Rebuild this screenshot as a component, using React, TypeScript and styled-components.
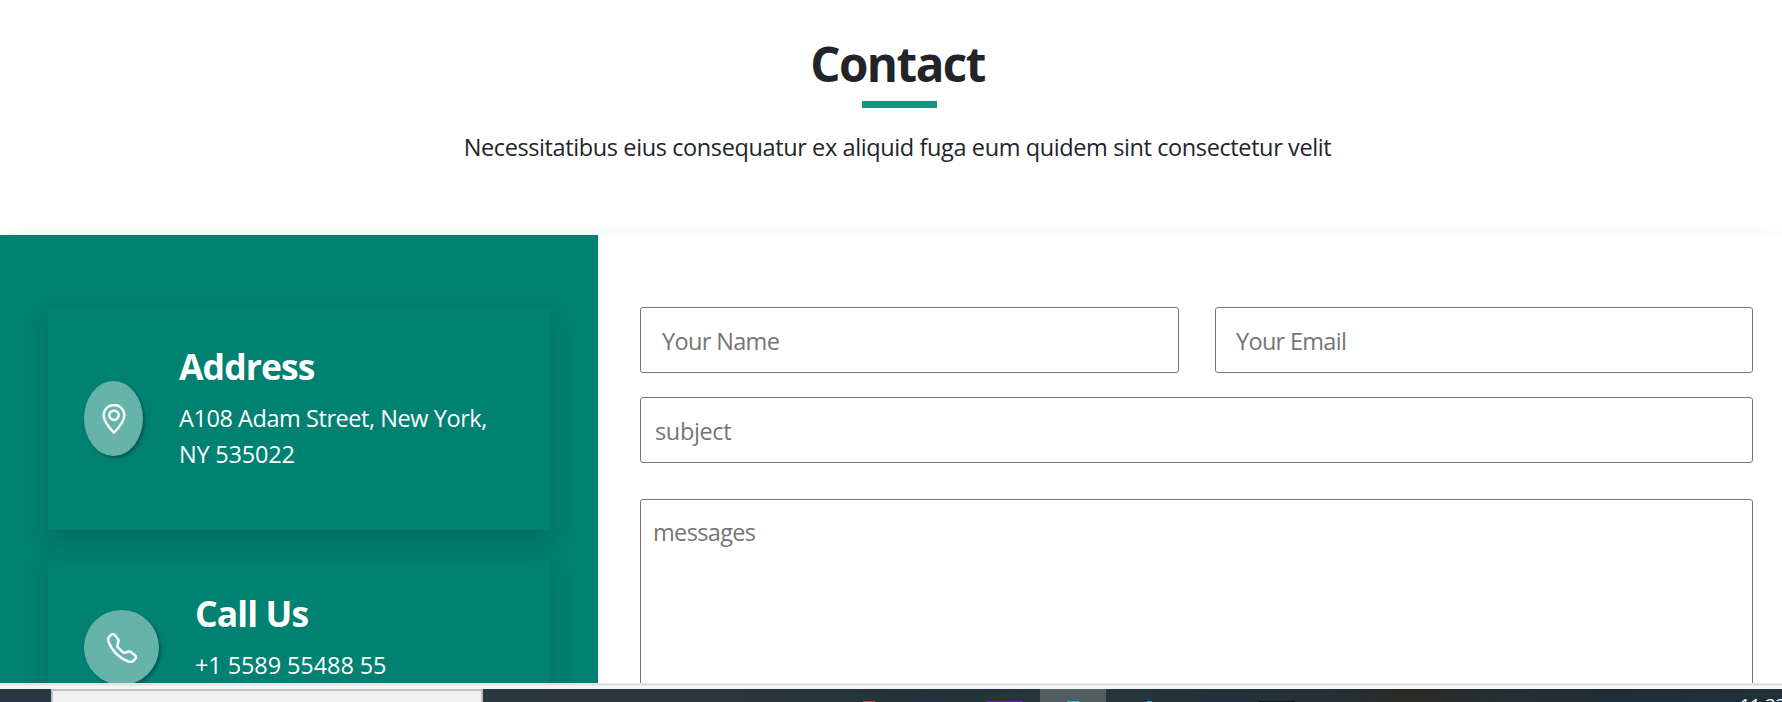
import React from "react";
import styled, { createGlobalStyle } from "styled-components";

const GlobalStyle = createGlobalStyle`
  *, *::before, *::after { box-sizing: border-box; }
  body {
    margin: 0;
    overflow: hidden;
    background: #fff;
    color: #212529;
    font-family: "Segoe UI", "Open Sans", "Noto Sans", sans-serif;
    font-size: 23.5px;
    line-height: 36px;
  }
  h2, h3, p { margin: 0; }
`;

const Screen = styled.div`
  display: flex;
  flex-direction: column;
  height: 702px;
  overflow: hidden;
`;

const Page = styled.main`
  flex: none;
  height: 683px;
  overflow: hidden;
`;

const SectionHeader = styled.header`
  display: flex;
  flex-direction: column;
  align-items: center;
  height: 235px;
  padding: 35px 0 0 13px;
`;

const Title = styled.h2`
  font-size: 47.5px;
  line-height: 58px;
  font-weight: 700;
  letter-spacing: -1.5px;
`;

const Underline = styled.div`
  width: 75px;
  height: 7px;
  margin: 8px 0 21px;
  background: #1a9282;
  transform: translateX(2px);
`;

const Intro = styled.p`
  white-space: nowrap;
  letter-spacing: -0.39px;
`;

const ContactRow = styled.section`
  display: flex;
  height: 900px;
  box-shadow: 0 12px 24px rgba(0, 0, 0, 0.15);
`;

const InfoPanel = styled.aside`
  flex: none;
  width: 598px;
  padding: 72px 48px;
  background: #008172;
  color: #fff;
  display: flex;
  flex-direction: column;
  gap: 24px;
`;

const InfoCard = styled.article<{ $height: number }>`
  flex: none;
  display: flex;
  align-items: center;
  gap: 36px;
  height: ${(p) => p.$height}px;
  padding: 0 36px;
  box-shadow: 0 12px 24px rgba(0, 0, 0, 0.15);
`;

const IconDisc = styled.div<{ $width: number }>`
  flex: none;
  display: flex;
  align-items: center;
  justify-content: center;
  width: ${(p) => p.$width}px;
  height: 75px;
  border-radius: 50%;
  background: #66b3aa;
  box-shadow: 2px 2px 3px rgba(0, 0, 0, 0.3);
`;

const CardText = styled.div`
  padding-bottom: 20px;
`;

const CardTitle = styled.h3`
  font-size: 35.5px;
  line-height: 43px;
  font-weight: 700;
  margin-bottom: 12px;
  letter-spacing: -0.9px;
`;

const CardLine = styled.p<{ $tracking?: number }>`
  white-space: nowrap;
  letter-spacing: ${(p) => p.$tracking ?? -0.44}px;
`;

const Form = styled.form`
  flex: 1;
  display: flex;
  flex-direction: column;
  padding: 72px 29px 0 42px;
  background: #fff;
`;

const FieldPair = styled.div`
  display: grid;
  grid-template-columns: 539px 538px;
  gap: 36px;
  margin-bottom: 24px;
`;

const Input = styled.input<{ $indent: number; $tracking: number }>`
  width: 100%;
  height: 66px;
  padding: 2px 12px 0 ${(p) => p.$indent}px;
  border: 1px solid #767676;
  border-radius: 3px;
  background: #fff;
  font: inherit;
  letter-spacing: ${(p) => p.$tracking}px;
  &::placeholder { color: #757575; opacity: 1; }
`;

const Message = styled.textarea`
  width: 100%;
  height: 300px;
  margin-top: 36px;
  padding: 14px 12px;
  border: 1px solid #767676;
  border-radius: 3px;
  background: #fff;
  font: inherit;
  letter-spacing: -0.65px;
  resize: none;
  &::placeholder { color: #757575; opacity: 1; }
`;

const WindowEdge = styled.div`
  flex: none;
  height: 6px;
  background: linear-gradient(#e9e9e9 0 1px, #dcdcdc 1px 2px, #efefef 2px 3px, #f6f6f6 3px);
`;

const Taskbar = styled.footer`
  position: relative;
  flex: none;
  display: flex;
  height: 13px;
  padding-left: 51px;
  overflow: hidden;
  background: linear-gradient(90deg, #283640 0, #283640 25%, #2a383b 36%, #24333b 52%, #27363a 62%, #22313a 70%, #252f33 75%, #2a2a27 79%, #252e33 85%, #1d2e36 91%, #20313a 100%);
`;

const SearchBox = styled.div`
  width: 432px;
  height: 50px;
  border: 2px solid #bfbfbf;
  background: #f1f1f1;
`;

const ActiveSlot = styled.div`
  width: 66px;
  height: 13px;
  margin-left: 557px;
  background: #525e60;
`;

const AppTip = styled.i<{ $x: number; $w: number; $color: string }>`
  position: absolute;
  top: 12px;
  left: ${(p) => p.$x}px;
  width: ${(p) => p.$w}px;
  height: 1px;
  background: ${(p) => p.$color};
`;

const Clock = styled.span`
  position: absolute;
  left: 1740px;
  top: 6px;
  color: #fff;
  font-size: 18px;
  line-height: 20px;
`;

const PinIcon = () => (
  <svg width="30" height="30" viewBox="0 0 16 16" fill="#fff" stroke="#fff" strokeWidth="0.3">
    <path d="M12.166 8.94c-.524 1.062-1.234 2.12-1.96 3.07A31.493 31.493 0 0 1 8 14.58a31.481 31.481 0 0 1-2.206-2.57c-.726-.95-1.436-2.008-1.96-3.07C3.304 7.867 3 6.862 3 6a5 5 0 0 1 10 0c0 .862-.305 1.867-.834 2.94zM8 16s6-5.686 6-10A6 6 0 0 0 2 6c0 4.314 6 10 6 10z" />
    <path d="M8 8a2 2 0 1 1 0-4 2 2 0 0 1 0 4zm0 1a3 3 0 1 0 0-6 3 3 0 0 0 0 6z" />
  </svg>
);

const PhoneIcon = () => (
  <svg width="30" height="30" viewBox="0 0 16 16" fill="#fff" stroke="#fff" strokeWidth="0.3">
    <path d="M3.654 1.328a.678.678 0 0 0-1.015-.063L1.605 2.3c-.483.484-.661 1.169-.45 1.77a17.568 17.568 0 0 0 4.168 6.608 17.569 17.569 0 0 0 6.608 4.168c.601.211 1.286.033 1.77-.45l1.034-1.034a.678.678 0 0 0-.063-1.015l-2.307-1.794a.678.678 0 0 0-.58-.122l-2.19.547a1.745 1.745 0 0 1-1.657-.459L5.482 8.062a1.745 1.745 0 0 1-.46-1.657l.548-2.19a.678.678 0 0 0-.122-.58L3.654 1.328zM1.884.511a1.745 1.745 0 0 1 2.612.163L6.29 2.98c.329.423.445.974.315 1.494l-.547 2.19a.678.678 0 0 0 .178.643l2.457 2.457a.678.678 0 0 0 .644.178l2.189-.547a1.745 1.745 0 0 1 1.494.315l2.306 1.794c.829.645.905 1.87.163 2.611l-1.034 1.034c-.74.74-1.846 1.065-2.877.702a18.634 18.634 0 0 1-7.01-4.42 18.634 18.634 0 0 1-4.42-7.009c-.362-1.03-.037-2.137.703-2.877L1.885.511z" />
  </svg>
);

export default function App() {
  return (
    <Screen>
      <GlobalStyle />
      <Page>
        <SectionHeader>
          <Title>Contact</Title>
          <Underline />
          <Intro>Necessitatibus eius consequatur ex aliquid fuga eum quidem sint consectetur velit</Intro>
        </SectionHeader>
        <ContactRow>
          <InfoPanel>
            <InfoCard $height={223}>
              <IconDisc $width={59}><PinIcon /></IconDisc>
              <CardText>
                <CardTitle>Address</CardTitle>
                <CardLine>A108 Adam Street, New York,</CardLine>
                <CardLine $tracking={-0.2}>NY 535022</CardLine>
              </CardText>
            </InfoCard>
            <InfoCard $height={187}>
              <IconDisc $width={75}><PhoneIcon /></IconDisc>
              <CardText>
                <CardTitle>Call Us</CardTitle>
                <CardLine $tracking={-0.1}>+1 5589 55488 55</CardLine>
              </CardText>
            </InfoCard>
          </InfoPanel>
          <Form>
            <FieldPair>
              <Input $indent={21} $tracking={-0.65} placeholder="Your Name" />
              <Input $indent={20} $tracking={-0.7} placeholder="Your Email" />
            </FieldPair>
            <Input $indent={14} $tracking={-0.35} placeholder="subject" />
            <Message placeholder="messages" />
          </Form>
        </ContactRow>
      </Page>
      <WindowEdge />
      <Taskbar>
        <SearchBox />
        <ActiveSlot />
        <AppTip $x={863} $w={12} $color="#b5483a" />
        <AppTip $x={987} $w={36} $color="#7719c8" />
        <AppTip $x={1067} $w={12} $color="#35b6cf" />
        <AppTip $x={1147} $w={5} $color="#2e9fe0" />
        <AppTip $x={1259} $w={36} $color="#0f1418" />
        <Clock>11:33</Clock>
      </Taskbar>
    </Screen>
  );
}
